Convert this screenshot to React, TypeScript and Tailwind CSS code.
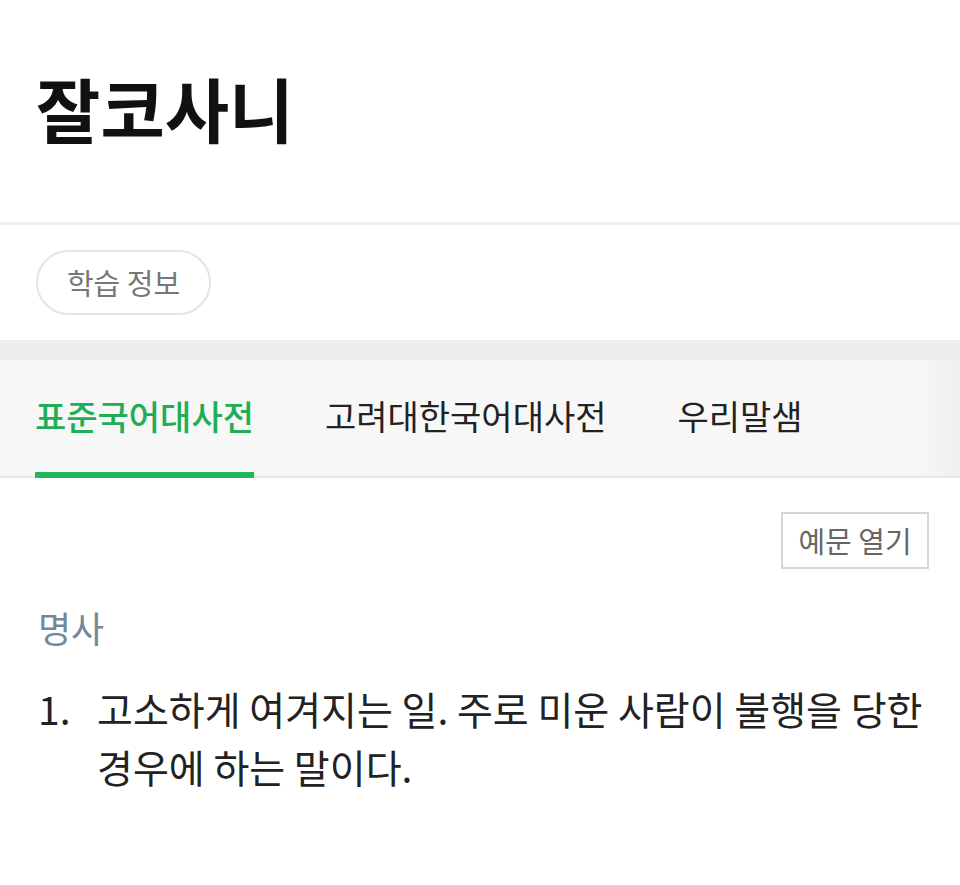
import React from "react";

export default function App() {
  const font = { fontFamily: '"Noto Sans CJK KR", "Noto Sans", sans-serif' };
  return (
    <div className="w-[960px] h-[885px] bg-white overflow-hidden" style={font}>
      <div className="h-[222px] flex items-center pl-[36px] pb-[6px]">
        <h1 className="text-[70px] font-bold text-[#111] leading-none">잘코사니</h1>
      </div>
      <div className="h-[3px] bg-[#efefef]" />
      <div className="h-[115px] pl-[36px] pt-[25px]">
        <div className="w-[175px] h-[65px] rounded-full border-2 border-[#e4e4e4] flex items-center justify-center text-[29px] text-[#777]">
          학습 정보
        </div>
      </div>
      <div className="h-[20px] bg-[#eceef0]" />
      <div className="h-[118px] bg-[#f7f7f7] border-b-2 border-[#e8e8e8] flex items-stretch pl-[35px] relative">
        <div className="relative flex items-center pb-[4px]">
          <span className="text-[34px] font-medium text-[#1fae55] leading-none">표준국어대사전</span>
          <div className="absolute left-0 right-0 bottom-[-2px] h-[6px] bg-[#22b65c]" />
        </div>
        <div className="flex items-center pb-[4px] ml-[71px]">
          <span className="text-[34px] text-[#222] leading-none">고려대한국어대사전</span>
        </div>
        <div className="flex items-center pb-[4px] ml-[71px]">
          <span className="text-[34px] text-[#222] leading-none">우리말샘</span>
        </div>
        <div className="absolute right-0 top-0 bottom-0 w-[40px] bg-gradient-to-r from-[#f7f7f7] to-[#efefef]" />
      </div>
      <div className="flex justify-end pr-[31px] pt-[34px]">
        <div className="w-[148px] h-[57px] border-2 border-[#d6d6d6] flex items-center justify-center text-[29px] text-[#666]">
          예문 열기
        </div>
      </div>
      <div className="pl-[38px] pt-[40px] text-[36px] text-[#75889a] leading-none">명사</div>
      <div className="flex pl-[38px] pr-[12px] pt-[34px] text-[39px] text-[#222] leading-[58px]">
        <span className="w-[59px] shrink-0">1.</span>
        <p className="break-keep">고소하게 여겨지는 일. 주로 미운 사람이 불행을 당한 경우에 하는 말이다.</p>
      </div>
    </div>
  );
}
